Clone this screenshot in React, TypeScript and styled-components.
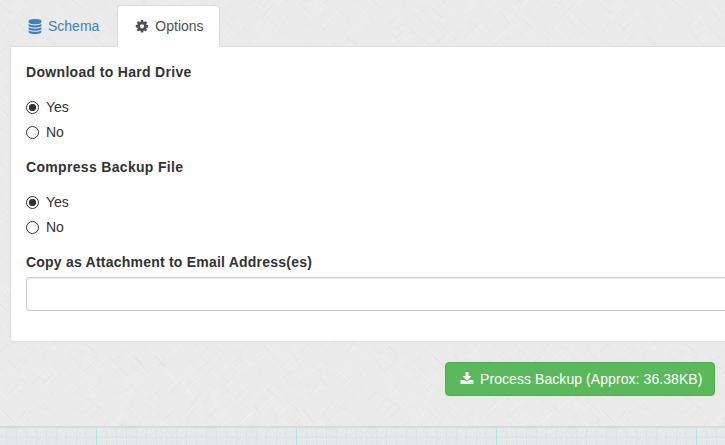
import React, { useState } from 'react';
import styled, { createGlobalStyle, css } from 'styled-components';

const svgUrl = (svg: string) => `url("data:image/svg+xml,${encodeURIComponent(svg)}")`;

const createRandom = (start: number) => {
  let seed = start;
  return () => {
    seed = (seed * 16807) % 2147483647;
    return seed / 2147483647;
  };
};

// Tile of faint crosshatched scratches, repeated behind the page.
const scratchTile = (size: number) => {
  const random = createRandom(7919);
  let strokes = '';
  for (let i = 0; i < 1800; i += 1) {
    const x = random() * (size + 20) - 10;
    const y = random() * (size + 20) - 10;
    const length = 3 + random() * 11;
    const rise = (random() > 0.5 ? length : -length) * (0.75 + random() * 0.4);
    const tone = random() > 0.42 ? '#fff' : '#cccccc';
    const opacity = (0.1 + random() * 0.17).toFixed(2);
    strokes += `<path d="M${x.toFixed(1)} ${y.toFixed(1)}l${length.toFixed(1)} ${rise.toFixed(1)}" stroke="${tone}" stroke-opacity="${opacity}"/>`;
  }
  return svgUrl(
    `<svg xmlns="http://www.w3.org/2000/svg" width="${size}" height="${size}">${strokes}</svg>`,
  );
};

// Graph paper: light ruling every 10px and a cyan rule every 200px.
const graphTile = () => {
  const random = createRandom(104729);
  let specks = '';
  for (let i = 0; i < 1300; i += 1) {
    const tone = random() > 0.45 ? '#f2f5f5' : '#d9dedf';
    specks += `<rect x="${Math.floor(random() * 200)}" y="${Math.floor(random() * 20)}" width="1" height="1" fill="${tone}" fill-opacity=".35"/>`;
  }
  let rules = '';
  for (let x = 6; x < 200; x += 10) {
    rules += `<rect x="${x}" width="1" height="20" fill="#d8dddf" fill-opacity=".45"/>`;
  }
  return svgUrl(
    `<svg xmlns="http://www.w3.org/2000/svg" width="200" height="20">${specks}${rules}<rect y="9" width="200" height="1" fill="#d8dddf" fill-opacity=".4"/><rect x="96" width="1" height="20" fill="#b5e3e3"/></svg>`,
  );
};

const GlobalStyle = createGlobalStyle`
  *, *::before, *::after { box-sizing: border-box; }
  body {
    margin: 0;
    overflow: hidden;
    background: #eaeaea ${scratchTile(300)};
    color: #333;
    font: 14px/20px "Liberation Sans", Arial, sans-serif;
  }
`;

const Page = styled.div`
  display: flex;
  flex-direction: column;
  height: 445px;
  padding-top: 5px;
`;

const Tabs = styled.nav`
  display: flex;
  height: 42px;
  padding-left: 10px;
`;

const Tab = styled.button<{ $active: boolean }>`
  display: flex;
  align-items: center;
  gap: 4px;
  height: 42px;
  margin: 0 2px 0 0;
  padding: 0 15px;
  border: 1px solid transparent;
  border-radius: 4px 4px 0 0;
  background: none;
  color: #3e7fbd;
  font: inherit;
  white-space: nowrap;
  cursor: pointer;
  ${({ $active }) =>
    $active &&
    css`
      z-index: 1;
      border-color: #ddd #ddd transparent;
      background: #fff;
      color: #505050;
    `}
`;

const Panel = styled.main`
  height: 296px;
  margin: -1px 0 0 10px;
  padding: 15px 0 15px 15px;
  border: 1px solid #ddd;
  border-right: 0;
  border-radius: 0 0 0 4px;
  background: #fff;
`;

const OptionGroup = styled.fieldset`
  height: 80px;
  margin: 0 0 15px;
  padding: 0;
  border: 0;
`;

const Heading = styled.legend`
  display: block;
  height: 20px;
  margin-bottom: 15px;
  padding: 0;
  font-weight: bold;
  letter-spacing: 0.32px;
`;

const RadioLabel = styled.label`
  display: flex;
  align-items: center;
  gap: 7px;
  width: max-content;
  height: 20px;
  margin-bottom: 5px;
`;

const Radio = styled.input`
  appearance: none;
  width: 13px;
  height: 13px;
  margin: 1px 0 0;
  border: 1px solid #333;
  border-radius: 50%;
  background: #fff;
  &:checked {
    background: radial-gradient(circle, #333 3.3px, #fff 4px);
  }
`;

const FieldLabel = styled.label`
  display: block;
  margin-bottom: 5px;
  font-weight: bold;
  letter-spacing: 0.22px;
`;

const TextInput = styled.input`
  display: block;
  width: 100%;
  height: 34px;
  padding: 6px 12px;
  border: 1px solid #ccc;
  border-right: 0;
  border-radius: 4px 0 0 4px;
  background: #fff;
  box-shadow: inset 0 1px 1px rgba(0, 0, 0, 0.075);
  color: #555;
  font: inherit;
`;

const Actions = styled.div`
  display: flex;
  justify-content: flex-end;
  padding: 20px 10px 30px;
`;

const SubmitButton = styled.button`
  display: flex;
  align-items: center;
  gap: 4px;
  width: 270px;
  height: 34px;
  padding: 0 12px;
  border: 1px solid #4cae4c;
  border-radius: 4px;
  background: #5cb85c;
  color: #fff;
  font: inherit;
  letter-spacing: 0.07px;
  white-space: nowrap;
`;

const Footer = styled.footer`
  flex: 1;
  border-top: 2px solid #d8dada;
  background: #e4e8e9 ${graphTile()} 0 0;
`;

const Glyph = styled.svg<{ $height?: number }>`
  flex: none;
  width: 18px;
  height: ${({ $height = 14 }) => $height}px;
  fill: currentColor;
`;

const DatabaseIcon = () => (
  <Glyph $height={15} viewBox="0 0 1536 1792" aria-hidden="true">
    <path d="M768 768q237 0 443-43t325-127v170q0 69-103 128t-280 93.500-385 34.500-385-34.500-280-93.500-103-128v-170q119 84 325 127t443 43zm0 768q237 0 443-43t325-127v170q0 69-103 128t-280 93.500-385 34.500-385-34.500-280-93.500-103-128v-170q119 84 325 127t443 43zm0-384q237 0 443-43t325-127v170q0 69-103 128t-280 93.500-385 34.500-385-34.500-280-93.500-103-128v-170q119 84 325 127t443 43zm0-1152q208 0 385 34.500t280 93.500 103 128v128q0 69-103 128t-280 93.500-385 34.500-385-34.500-280-93.500-103-128v-128q0-69 103-128t280-93.500 385-34.500z" />
  </Glyph>
);

const CogIcon = () => (
  <Glyph $height={14.5} viewBox="0 0 1536 1792" aria-hidden="true">
    <path d="M1024 896q0-106-75-181t-181-75-181 75-75 181 75 181 181 75 181-75 75-181zm512-109v222q0 12-8 23t-20 13l-185 28q-19 54-39 91 35 50 107 138 10 12 10 25t-9 23q-27 37-99 108t-94 71q-12 0-26-9l-138-108q-44 23-91 38-16 136-29 186-7 28-36 28h-222q-14 0-24.500-8.500t-11.500-21.500l-28-184q-49-16-90-37l-141 107q-10 9-25 9-14 0-25-11-126-114-165-168-7-10-7-23 0-12 8-23 15-21 51-66.500t54-70.500q-27-50-41-99l-183-27q-13-2-21-12.500t-8-23.500v-222q0-12 8-23t19-13l186-28q14-46 39-92-40-57-107-138-10-12-10-24 0-10 9-23 26-36 98.500-107.500t94.500-71.500q13 0 26 10l138 107q44-23 91-38 16-136 29-186 7-28 36-28h222q14 0 24.500 8.500t11.500 21.500l28 184q49 16 90 37l142-107q9-9 24-9 13 0 25 10 129 119 165 170 7 8 7 22 0 12-8 23-15 21-51 66.500t-54 70.500q26 50 41 98l183 28q13 2 21 12.500t8 23.500z" />
  </Glyph>
);

const DownloadIcon = () => (
  <Glyph viewBox="64 0 1664 1792" aria-hidden="true">
    <path d="M1344 1344q0-26-19-45t-45-19-45 19-19 45 19 45 45 19 45-19 19-45zm256 0q0-26-19-45t-45-19-45 19-19 45 19 45 45 19 45-19 19-45zm128-224v320q0 40-28 68t-68 28h-1472q-40 0-68-28t-28-68v-320q0-40 28-68t68-28h465l135 136q58 56 136 56t136-56l136-136h464q40 0 68 28t28 68zm-325-569q17 41-14 70l-448 448q-18 19-45 19t-45-19l-448-448q-31-29-14-70 17-39 59-39h256v-448q0-26 19-45t45-19h256q26 0 45 19t19 45v448h256q42 0 59 39z" />
  </Glyph>
);

const YesNoGroup = ({ title, name }: { title: string; name: string }) => (
  <OptionGroup>
    <Heading>{title}</Heading>
    <RadioLabel>
      <Radio type="radio" name={name} defaultChecked />
      Yes
    </RadioLabel>
    <RadioLabel>
      <Radio type="radio" name={name} />
      No
    </RadioLabel>
  </OptionGroup>
);

export default function App() {
  const [tab, setTab] = useState('options');
  return (
    <>
      <GlobalStyle />
      <Page>
        <Tabs>
          <Tab $active={tab === 'schema'} onClick={() => setTab('schema')}>
            <DatabaseIcon />
            Schema
          </Tab>
          <Tab $active={tab === 'options'} onClick={() => setTab('options')}>
            <CogIcon />
            Options
          </Tab>
        </Tabs>
        <Panel>
          <YesNoGroup title="Download to Hard Drive" name="download" />
          <YesNoGroup title="Compress Backup File" name="compress" />
          <FieldLabel htmlFor="emails">Copy as Attachment to Email Address(es)</FieldLabel>
          <TextInput id="emails" type="text" />
        </Panel>
        <Actions>
          <SubmitButton type="button">
            <DownloadIcon />
            Process Backup (Approx: 36.38KB)
          </SubmitButton>
        </Actions>
        <Footer />
      </Page>
    </>
  );
}
